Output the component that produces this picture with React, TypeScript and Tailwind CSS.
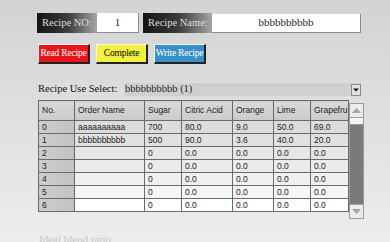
import React from 'react'

const cols = [
  { name: 'No.', w: 36 },
  { name: 'Order Name', w: 70 },
  { name: 'Sugar', w: 37 },
  { name: 'Citric Acid', w: 51 },
  { name: 'Orange', w: 41 },
  { name: 'Lime', w: 37 },
  { name: 'Grapefru', w: 34 },
]

const rows: string[][] = [
  ['0', 'aaaaaaaaaa', '700', '80.0', '9.0', '50.0', '69.0'],
  ['1', 'bbbbbbbbbb', '500', '90.0', '3.6', '40.0', '20.0'],
  ['2', '', '0', '0.0', '0.0', '0.0', '0.0'],
  ['3', '', '0', '0.0', '0.0', '0.0', '0.0'],
  ['4', '', '0', '0.0', '0.0', '0.0', '0.0'],
  ['5', '', '0', '0.0', '0.0', '0.0', '0.0'],
  ['6', '', '0', '0.0', '0.0', '0.0', '0.0'],
]

const rowBg = ['bg-[#dcdcdc]', 'bg-[#e1e1e1]', 'bg-[#e6e6e6]', 'bg-[#ebebeb]', 'bg-[#f0f0f0]', 'bg-[#f6f6f6]', 'bg-[#ffffff]']

function Label({ children, w }: { children: React.ReactNode; w: string }) {
  return (
    <div
      className={`${w} h-[20px] flex items-center pl-[5px] bg-gradient-to-r from-[#141414] via-[#3a3a3a] to-[#a6a6a6] text-[#dcdcdc] text-[10.5px]`}
    >
      {children}
    </div>
  )
}

function Btn({ children, cls }: { children: React.ReactNode; cls: string }) {
  return (
    <button
      type="button"
      className={`w-[52px] h-[20px] px-0 flex items-center justify-center whitespace-nowrap tracking-[-0.2px] text-[9.5px] border-t border-l border-t-[#f4f4f4] border-l-[#f4f4f4] border-r-2 border-b-2 border-r-[#222] border-b-[#222] ${cls}`}
    >
      {children}
    </button>
  )
}

export default function App() {
  return (
    <div
      className="w-[390px] h-[242px] overflow-hidden bg-gradient-to-b from-[#d3d3d3] to-[#ededed] pl-[37px] pt-[13px]"
      style={{ fontFamily: '"Liberation Serif", serif' }}
    >
      <div className="flex items-center">
        <Label w="w-[60px]">Recipe NO:</Label>
        <div className="w-[42px] h-[20px] bg-white flex items-center justify-center text-[11px] text-[#222] border-r border-b border-[#8a8a8a]">
          1
        </div>
        <div className="w-[4px]" />
        <Label w="w-[69px]">Recipe Name:</Label>
        <div className="w-[149px] h-[19px] bg-white flex items-center justify-center text-[11px] text-[#222] border-r border-b border-[#8a8a8a]">
          bbbbbbbbbb
        </div>
      </div>

      <div className="flex items-center gap-[6px] mt-[11px] ml-[1px]">
        <Btn cls="bg-[#e8161b] text-white">Read Recipe</Btn>
        <Btn cls="bg-[#f2f23c] text-black">Complete</Btn>
        <Btn cls="bg-[#3990c8] text-white">Write Recipe</Btn>
      </div>

      <div className="flex items-center mt-[19px] ml-[1px] h-[13px]">
        <div className="w-[86px] text-[10.5px] text-[#111] leading-none">Recipe Use Select:</div>
        <div className="w-[237px] h-[13px] bg-[#d0d0d0] flex items-center justify-between">
          <span className="pl-[1px] text-[10.5px] text-[#222] leading-none">bbbbbbbbbb (1)</span>
          <div className="w-[10px] h-[12px] bg-[#e2e2e2] border border-[#8a8a8a] flex items-center justify-center">
            <svg width="6" height="4" viewBox="0 0 6 4">
              <path d="M0 0.5 L6 0.5 L3 3.5 Z" fill="#111" />
            </svg>
          </div>
        </div>
      </div>

      <div className="flex mt-[4px] ml-[1px]">
        <table
          className="border-collapse table-fixed text-[8.5px] text-[#222] leading-none self-start"
          style={{ fontFamily: '"Liberation Sans", Arial, sans-serif' }}
        >
          <colgroup>
            {cols.map((c) => (
              <col key={c.name} style={{ width: c.w }} />
            ))}
          </colgroup>
          <thead>
            <tr>
              {cols.map((c) => (
                <th
                  key={c.name}
                  className="h-[20px] border border-[#6a6a6a] bg-gradient-to-b from-[#d9d9d9] to-[#cbcbcb] text-left font-normal pl-[3px] pr-0 overflow-hidden whitespace-nowrap"
                >
                  {c.name}
                </th>
              ))}
            </tr>
          </thead>
          <tbody>
            {rows.map((r, i) => (
              <tr key={i}>
                {r.map((v, j) => (
                  <td
                    key={j}
                    className={`h-[13px] border border-[#6a6a6a] pl-[3px] whitespace-nowrap overflow-hidden ${
                      j === 0 ? 'bg-gradient-to-r from-[#cdcdcd] to-[#c3c3c3]' : rowBg[i]
                    }`}
                  >
                    {v}
                  </td>
                ))}
              </tr>
            ))}
          </tbody>
        </table>

        <div className="w-[15px] h-[116px] mt-[3px] flex flex-col border border-[#9a9a9a] bg-[#7a7a7a]">
          <div className="h-[14px] bg-[#ececec] flex items-center justify-center border-b border-[#a0a0a0]">
            <svg width="9" height="5" viewBox="0 0 9 5">
              <path d="M0 5 L9 5 L4.5 0 Z" fill="#a3a3a3" />
            </svg>
          </div>
          <div className="h-[7px] bg-[#f4f4f4] border-b border-[#9a9a9a]" />
          <div className="flex-1 bg-[#7a7a7a]" />
          <div className="h-[14px] bg-[#ececec] flex items-center justify-center border-t border-[#a0a0a0]">
            <svg width="9" height="5" viewBox="0 0 9 5">
              <path d="M0 0 L9 0 L4.5 5 Z" fill="#a3a3a3" />
            </svg>
          </div>
        </div>
      </div>

      <div className="mt-[15px] ml-[2px] text-[11px] leading-none text-[#c4c4c4]">Ideal blend ratio</div>
    </div>
  )
}
